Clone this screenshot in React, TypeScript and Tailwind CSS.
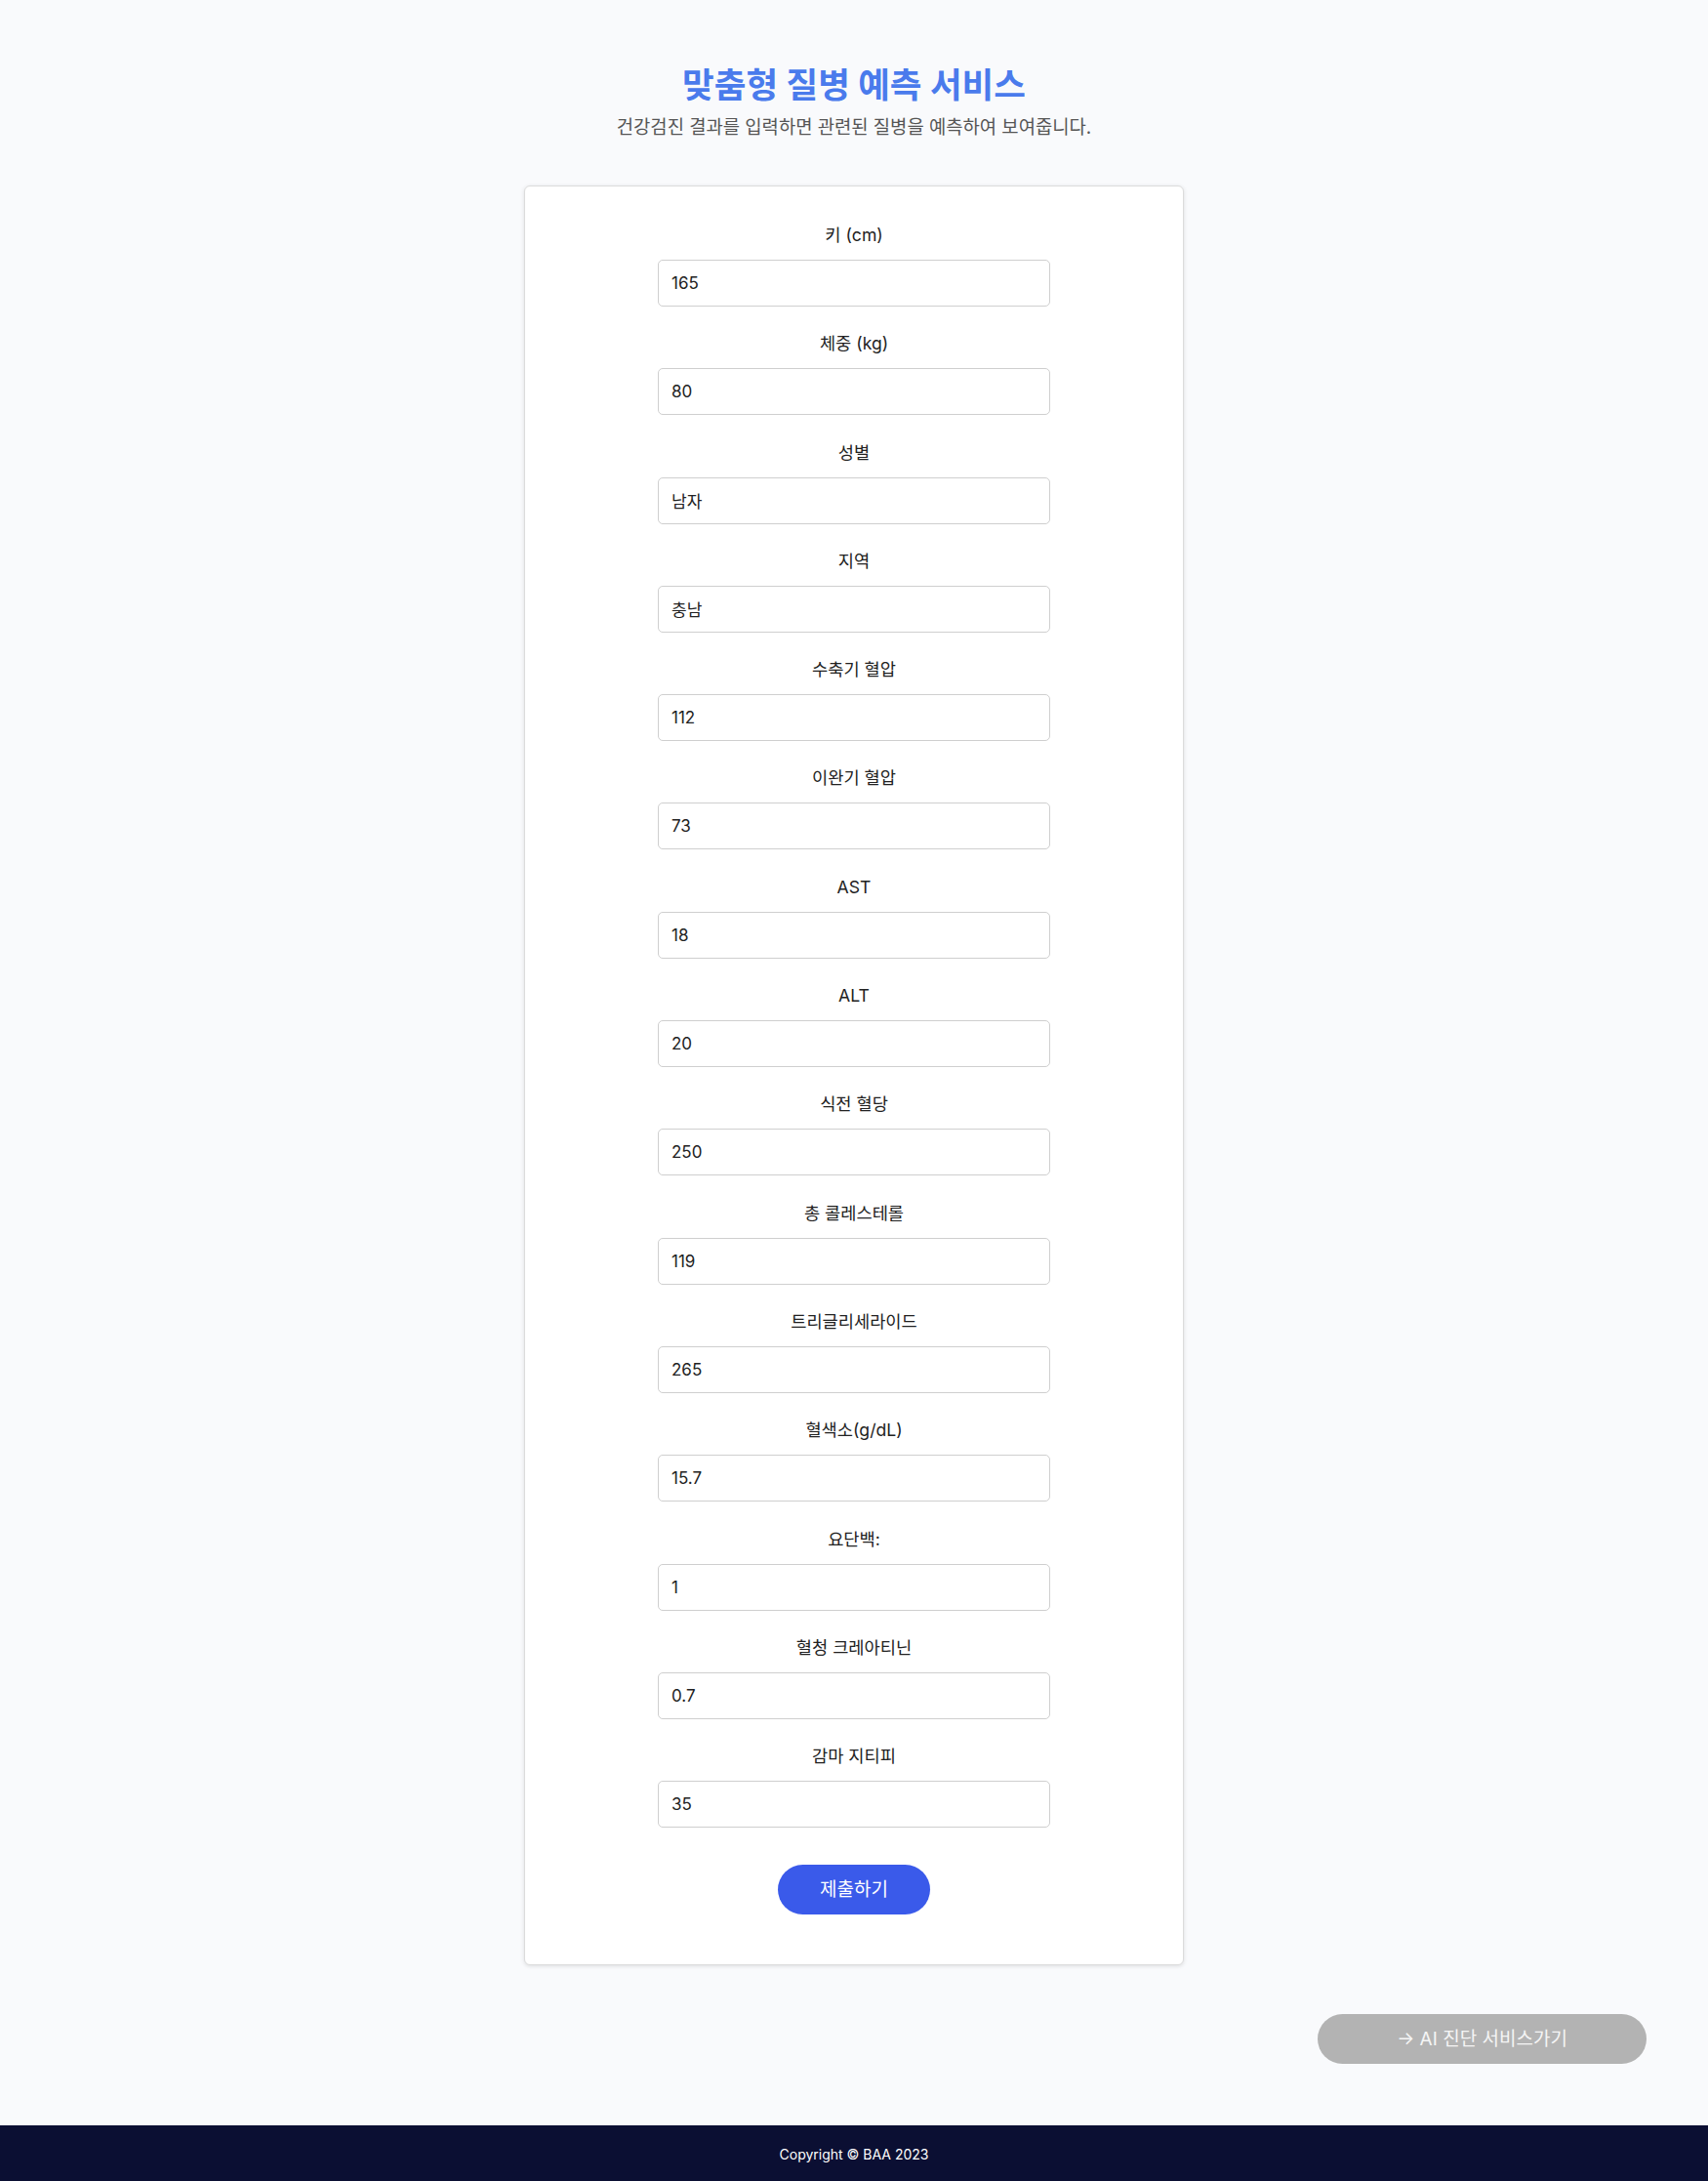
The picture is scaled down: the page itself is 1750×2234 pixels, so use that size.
import React from "react";

const fields: [string, string][] = [
  ["키 (cm)", "165"],
  ["체중 (kg)", "80"],
  ["성별", "남자"],
  ["지역", "충남"],
  ["수축기 혈압", "112"],
  ["이완기 혈압", "73"],
  ["AST", "18"],
  ["ALT", "20"],
  ["식전 혈당", "250"],
  ["총 콜레스테롤", "119"],
  ["트리글리세라이드", "265"],
  ["혈색소(g/dL)", "15.7"],
  ["요단백:", "1"],
  ["혈청 크레아티닌", "0.7"],
  ["감마 지티피", "35"],
];

export default function App() {
  return (
    <div
      className="min-h-[2234px] bg-[#f9fafc] flex flex-col"
      style={{ fontFamily: 'Inter, "Noto Sans CJK KR", "Noto Sans", sans-serif' }}
    >
      <main className="flex-1 flex flex-col items-center pt-[66px]">
        <h1 className="text-[35.5px] leading-[43px] font-bold text-[#4a7bec]">맞춤형 질병 예측 서비스</h1>
        <p className="mt-[8px] text-[18.8px] leading-[28px] text-[#555]">
          건강검진 결과를 입력하면 관련된 질병을 예측하여 보여줍니다.
        </p>

        <form
          className="mt-[45px] w-[676px] bg-white border border-[#dcdcdc] rounded-[6px] shadow-[0_1px_4px_rgba(0,0,0,0.12)] pt-[37px] pb-[51px] flex flex-col items-center"
          onSubmit={(e) => e.preventDefault()}
        >
          {fields.map(([label, value]) => (
            <div key={label} className="flex flex-col items-center mb-[25.3px]">
              <label className="text-[17.6px] leading-[26px] text-[#222] mb-[12px]">{label}</label>
              <input
                readOnly
                value={value}
                className="w-[402px] h-[48px] border border-[#cfcfcf] rounded-[5px] px-[13px] text-[17px] text-[#222] bg-white outline-none"
              />
            </div>
          ))}
          <button
            type="submit"
            className="mt-[13px] w-[156px] h-[51px] rounded-full bg-[#3a5aea] text-white text-[19px]"
          >
            제출하기
          </button>
        </form>

        <div className="w-full flex justify-end pr-[63px] mt-[50px] mb-[63px]">
          <button className="w-[337px] h-[51px] rounded-full bg-[#b3b3b3] text-[#f5f5f5] text-[19px]">
            → AI 진단 서비스가기
          </button>
        </div>
      </main>

      <footer className="h-[58px] bg-[#0b0f33] flex items-center justify-center">
        <span className="text-white text-[14px]">Copyright © BAA 2023</span>
      </footer>
    </div>
  );
}
